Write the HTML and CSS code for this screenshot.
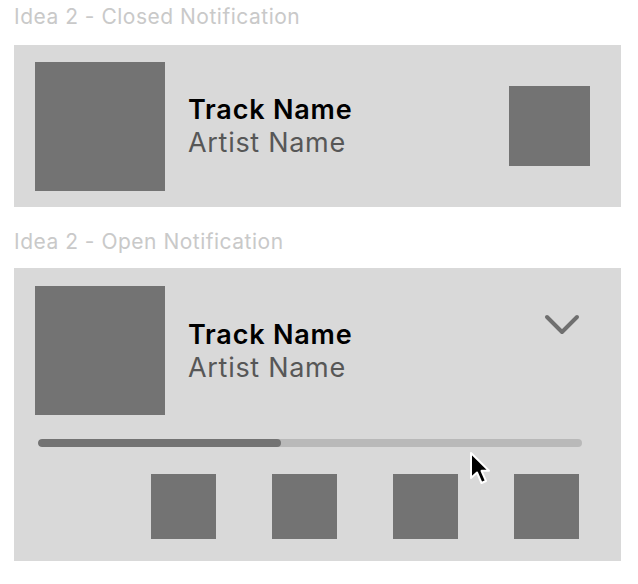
FILE: index.html
```html
<!DOCTYPE html>
<html>
<head>
<meta charset="utf-8">
<link rel="stylesheet" href="styles.css">
</head>
<body>
<div class="page">
  <div class="label">Idea 2 - Closed Notification</div>
  <div class="card closed">
    <div class="art"></div>
    <div class="meta">
      <div class="track">Track Name</div>
      <div class="artist">Artist Name</div>
    </div>
    <div class="action"></div>
  </div>

  <div class="label second">Idea 2 - Open Notification</div>
  <div class="card open">
    <div class="head">
      <div class="art"></div>
      <div class="meta">
        <div class="track">Track Name</div>
        <div class="artist">Artist Name</div>
      </div>
      <svg class="chevron" width="36" height="22" viewBox="0 0 36 22">
        <polyline points="3,3 18,18 33,3" fill="none" stroke="#6f6f6f" stroke-width="4" stroke-linecap="round" stroke-linejoin="round"/>
      </svg>
    </div>
    <div class="progress"><div class="fill" style="width:44.7%"></div></div>
    <div class="controls">
      <div class="ctrl"></div>
      <div class="ctrl"></div>
      <div class="ctrl"></div>
      <div class="ctrl"></div>
    </div>
  </div>
</div>
<svg class="cursor" width="24" height="38" viewBox="0 0 24 38">
  <path d="M2 2 L2 27 L8 21.5 L12.5 32 L17 30 L12.5 19.8 L20 19.8 Z" fill="#000" stroke="#fff" stroke-width="2" stroke-linejoin="round"/>
</svg>
</body>
</html>
```

FILE: styles.css
```css
html, body {
  margin: 0;
  padding: 0;
  background: #ffffff;
}
body {
  font-family: Inter, "Noto Sans", "Liberation Sans", sans-serif;
  width: 638px;
  height: 584px;
  position: relative;
  overflow: hidden;
}
.page {
  padding: 5px 17px 0 14px;
}
.label {
  font-size: 21px;
  line-height: 24px;
  letter-spacing: 0.5px;
  color: #c9c9c9;
  height: 24px;
}
.label.second {
  margin-top: 23px;
}
.card {
  background: #d9d9d9;
  margin-top: 16px;
  width: 607px;
  box-sizing: border-box;
}
.card.closed {
  display: flex;
  align-items: center;
  height: 162px;
  padding: 0 31px 0 21px;
}
.art {
  width: 130px;
  height: 129px;
  background: #737373;
  flex: none;
}
.meta {
  margin-left: 23px;
  display: flex;
  flex-direction: column;
  flex: 1;
}
.track {
  font-size: 27px;
  line-height: 33px;
  font-weight: 600;
  letter-spacing: 0.8px;
  color: #000;
}
.artist {
  font-size: 27px;
  line-height: 33px;
  letter-spacing: 0.7px;
  color: #575757;
}
.action {
  width: 81px;
  height: 80px;
  background: #737373;
  flex: none;
}
.card.open {
  height: 293px;
  padding: 18px 0 0 21px;
  margin-top: 14px;
}
.head {
  display: flex;
  align-items: center;
  height: 129px;
  padding-right: 41px;
}
.chevron {
  align-self: flex-start;
  margin-top: 28px;
  flex: none;
}
.progress {
  margin: 24px 39px 0 3px;
  height: 8px;
  border-radius: 4px;
  background: #b9b9b9;
  overflow: hidden;
}
.fill {
  height: 100%;
  background: #737373;
  border-radius: 4px;
}
.controls {
  display: flex;
  justify-content: flex-end;
  gap: 56px;
  margin-top: 27px;
  padding-right: 42px;
}
.ctrl {
  width: 65px;
  height: 65px;
  background: #737373;
}
.ctrl:first-child {
  margin-right: 0;
}
.cursor {
  position: absolute;
  left: 469px;
  top: 451px;
}
```
